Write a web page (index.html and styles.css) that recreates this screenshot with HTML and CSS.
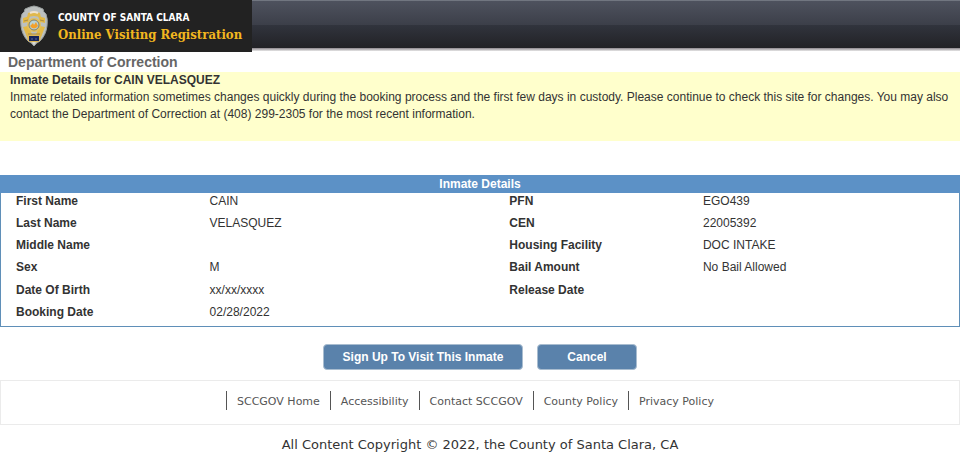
FILE: index.html
```html
<!DOCTYPE html>
<html lang="en">
<head>
<meta charset="utf-8">
<title>Online Visiting Registration</title>
<link rel="stylesheet" href="styles.css">
</head>
<body>
<header class="banner">
  <div class="brand">
    <svg class="badge" viewBox="0 0 30 42" aria-hidden="true">
      <path d="M15 1 L19 2 L24 4 Q24 7 27 9 Q29 14 28 21 Q27 30 21 36 Q17 38 15 41 Q13 38 9 36 Q3 30 2 21 Q1 14 3 9 Q6 7 6 4 L11 2 Z" fill="#bcc0bf" stroke="#9aa09f" stroke-width="1"/>
      <path d="M9 8 Q15 5 21 8 L22 13 Q15 9 8 13 Z" fill="#e0b84d"/>
      <path d="M11 8 Q15 6 19 8" fill="none" stroke="#efe2cf" stroke-width="2"/>
      <path d="M4 13 L11 11 L9 17 L4 18 Z M26 13 L19 11 L21 17 L26 18 Z M4 22 L9 21 L13 29 L8 32 Z M26 22 L21 21 L17 29 L22 32 Z" fill="#e3b945"/>
      <path d="M7 27 Q15 32 23 27 L21 36 Q15 39 9 36 Z" fill="#ddb652"/>
      <path d="M5 16 L9 15 M21 15 L25 16 M9 29 L21 29" stroke="#ab8b45" stroke-width="1"/>
      <circle cx="15" cy="20" r="7" fill="#e3bf5c"/>
      <circle cx="15" cy="20" r="5" fill="#b9d3d5" stroke="#7c8072" stroke-width="1"/>
      <path d="M11 21 L14 18 L15 20 L17 17 L19 21 Q15 26 11 21 Z" fill="#f3a02a"/>
      <rect x="10" y="31" width="10" height="5" fill="#17255a"/>
      <path d="M12 34 H14 M16 34 H18" stroke="#58679b" stroke-width="1"/>
      <path d="M13 37 H17 L15 40 Z" fill="#d9dad3"/>
    </svg>
    <div class="brand-text">
      <div class="brand-county">COUNTY OF SANTA CLARA</div>
      <div class="brand-name">Online Visiting Registration</div>
    </div>
  </div>
</header>
<main>
  <h1 class="department">Department of Correction</h1>
  <section class="notice">
    <h2>Inmate Details for CAIN VELASQUEZ</h2>
    <p>Inmate related information sometimes changes quickly during the booking process and the first few days in custody. Please continue to check this site for changes. You may also contact the Department of Correction at (408) 299-2305 for the most recent information.</p>
  </section>
  <table class="details">
    <caption>Inmate Details</caption>
    <colgroup><col class="label-col"><col class="value-col"><col class="label-col"><col></colgroup>
    <tbody>
      <tr><th scope="row">First Name</th><td>CAIN</td><th scope="row">PFN</th><td>EGO439</td></tr>
      <tr><th scope="row">Last Name</th><td>VELASQUEZ</td><th scope="row">CEN</th><td>22005392</td></tr>
      <tr><th scope="row">Middle Name</th><td></td><th scope="row">Housing Facility</th><td>DOC INTAKE</td></tr>
      <tr><th scope="row">Sex</th><td>M</td><th scope="row">Bail Amount</th><td>No Bail Allowed</td></tr>
      <tr><th scope="row">Date Of Birth</th><td>xx/xx/xxxx</td><th scope="row">Release Date</th><td></td></tr>
      <tr><th scope="row">Booking Date</th><td>02/28/2022</td><td></td><td></td></tr>
    </tbody>
  </table>
  <div class="actions">
    <button type="button" class="wide">Sign Up To Visit This Inmate</button>
    <button type="button">Cancel</button>
  </div>
</main>
<footer>
  <nav class="links">
    <a href="#">SCCGOV Home</a>
    <a href="#">Accessibility</a>
    <a href="#">Contact SCCGOV</a>
    <a href="#">County Policy</a>
    <a href="#">Privacy Policy</a>
  </nav>
  <p class="copyright">All Content Copyright © 2022, the County of Santa Clara, CA</p>
</footer>
</body>
</html>
```

FILE: styles.css
```css
* { box-sizing: border-box; }

body {
  margin: 0 4px 0 0;
  background: #fff;
  color: #333;
  font: 12px/17px "Liberation Sans", Arial, sans-serif;
}

h1, h2, p { margin: 0; }

.banner {
  height: 52px;
  background:
    linear-gradient(#717680, #717680) 0 0 / 100% 1px no-repeat,
    linear-gradient(#4e525e, #3c3f49) 0 1px / 100% 24px no-repeat,
    linear-gradient(#31343d, #222226) 0 25px / 100% 23px no-repeat,
    linear-gradient(#8b858b, #e8e8e8) 0 48px / 100% 3px no-repeat;
}

.brand {
  display: flex;
  align-items: center;
  gap: 9px;
  width: 252px;
  height: 52px;
  padding-left: 19px;
  background: #222;
}

.badge {
  flex: none;
  width: 30px;
  height: 42px;
}

.brand-text {
  padding-top: 1px;
  white-space: nowrap;
}

.brand-county {
  color: #fff;
  font: bold 10px/16px "DejaVu Sans Condensed", "DejaVu Sans", Verdana, sans-serif;
}

.brand-name {
  color: #f2b71f;
  font: bold 13px/18px "DejaVu Serif Condensed", "DejaVu Serif", serif;
}

.department {
  padding-left: 8px;
  color: #666;
  font-size: 14px;
  line-height: 20px;
}

.notice {
  min-height: 69px;
  padding: 0 10px;
  background: #ffffcc;
}

.notice h2 {
  font-size: 12px;
  line-height: 17px;
}

.details {
  width: 100%;
  height: 134px;
  margin-top: 34px;
  border: 1px solid #5f8fb8;
  border-top: 0;
  border-collapse: separate;
  border-spacing: 0;
  table-layout: fixed;
}

.details caption {
  height: 18px;
  background: #5c91c6;
  color: #fff;
  font-weight: bold;
  line-height: 18px;
}

.label-col { width: 20%; }
.value-col { width: 31.5%; }

.details th,
.details td {
  height: 22px;
  padding: 0 0 5px 15px;
  text-align: left;
  vertical-align: top;
}

.details td { padding-left: 17px; }

.actions {
  display: flex;
  justify-content: center;
  gap: 14px;
  margin-top: 17px;
}

.actions button {
  width: 100px;
  height: 26px;
  padding: 0;
  border: 1px solid #a9bdd0;
  border-radius: 4px;
  background: #5a82ab;
  color: #fff;
  font: bold 12px/17px "Liberation Sans", Arial, sans-serif;
}

.actions .wide { width: 200px; }

footer {
  margin-top: 10px;
  font-family: "DejaVu Sans", Verdana, sans-serif;
}

.links {
  display: flex;
  justify-content: center;
  height: 45px;
  padding: 10px 10px 10px 0;
  border: 1px solid #ebebeb;
}

.links a {
  height: 19px;
  padding: 0 10px;
  border-left: 1px solid #555;
  color: #555;
  font-size: 11px;
  line-height: 21px;
  text-decoration: none;
}

.copyright {
  margin-top: 11px;
  font-size: 13px;
  line-height: 18px;
  text-align: center;
}
```
